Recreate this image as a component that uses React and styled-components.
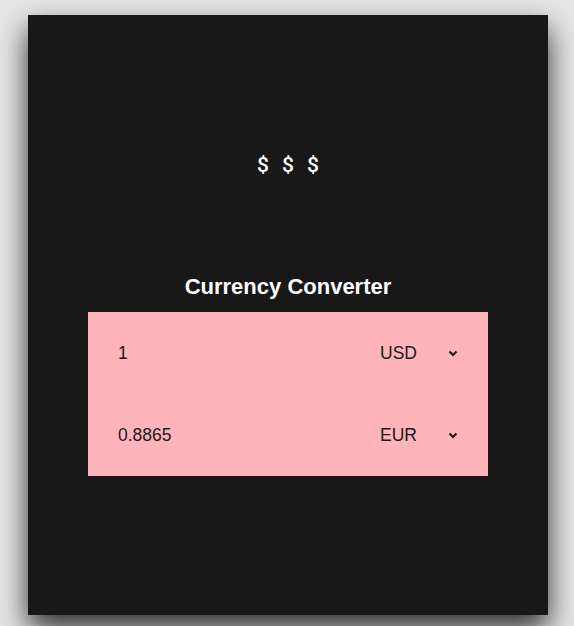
import { useState } from "react";
import styled, { createGlobalStyle } from "styled-components";

const GlobalStyle = createGlobalStyle`
  html, body {
    margin: 0;
    padding: 0;
    background: #e6e6e6;
    font-family: "Liberation Sans", Arial, sans-serif;
  }
`

const Page = styled.div`
  width: 574px;
  height: 626px;
  padding: 15px 26px 0 28px;
  box-sizing: border-box;
  overflow: hidden;
`
const Card = styled.div`
  width: 520px;
  height: 600px;
  background: #181818;
  box-shadow: 0 14px 28px rgba(0, 0, 0, 0.8);
  display: flex;
  flex-direction: column;
  align-items: center;
  padding-top: 125px;
  box-sizing: border-box;
`
const Dollars = styled.div`
  display: flex;
  gap: 13px;
  color: #fff;
  font-family: Roboto, sans-serif;
  font-size: 21px;
  font-weight: 500;
  line-height: 50px;
  height: 50px;
`
const Title = styled.h2`
  margin: 84px 0 0 0;
  color: #fff;
  font-size: 22px;
  font-weight: bold;
  line-height: 26px;
`
const Converter = styled.div`
  margin-top: 12px;
  width: 400px;
  background: #ffb3ba;
  display: flex;
  flex-direction: column;
`
const Row = styled.div`
  height: 82px;
  display: flex;
  align-items: center;
  justify-content: space-between;
  padding: 0 30px;
`
const Amount = styled.input`
  border: none;
  background: transparent;
  outline: none;
  font-family: "Liberation Sans", Arial, sans-serif;
  font-size: 17.5px;
  color: #1a1a1a;
  padding: 0;
  width: 200px;
`
const SelectWrap = styled.label`
  display: flex;
  align-items: center;
  width: 78px;
  justify-content: space-between;
  color: #1a1a1a;
  font-size: 17.5px;
`
const Select = styled.select`
  appearance: none;
  border: none;
  background: transparent;
  outline: none;
  font-family: "Liberation Sans", Arial, sans-serif;
  font-size: 17.5px;
  color: #1a1a1a;
  padding: 0;
  width: 60px;
`

const Chevron = () => (
  <svg width="10" height="7" viewBox="0 0 10 7">
    <path d="M1.5 1.5 L5 5 L8.5 1.5" fill="none" stroke="#1a1a1a" strokeWidth="2.2" />
  </svg>
)

export default function App() {
  const [amount, setAmount] = useState("1");
  const [from, setFrom] = useState("USD");
  const [to, setTo] = useState("EUR");

  return <Page>
    <GlobalStyle />
    <Card>
      <Dollars><span>$</span><span>$</span><span>$</span></Dollars>
      <Title>Currency Converter</Title>
      <Converter>
        <Row>
          <Amount value={amount} onChange={e => setAmount(e.target.value)} />
          <SelectWrap>
            <Select value={from} onChange={e => setFrom(e.target.value)}>
              <option>USD</option>
              <option>EUR</option>
            </Select>
            <Chevron />
          </SelectWrap>
        </Row>
        <Row>
          <Amount value="0.8865" readOnly />
          <SelectWrap>
            <Select value={to} onChange={e => setTo(e.target.value)}>
              <option>EUR</option>
              <option>USD</option>
            </Select>
            <Chevron />
          </SelectWrap>
        </Row>
      </Converter>
    </Card>
  </Page>
}
